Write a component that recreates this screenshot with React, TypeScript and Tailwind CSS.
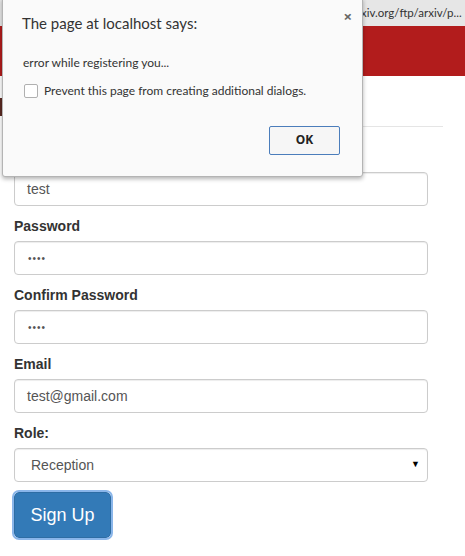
export default function App() {
  const fields = [
    { label: "Password", value: "••••", dots: true },
    { label: "Confirm Password", value: "••••", dots: true },
    { label: "Email", value: "test@gmail.com", dots: false },
  ];

  return (
    <div className="relative w-[465px] h-[556px] overflow-hidden bg-white font-['Liberation_Sans',Arial,sans-serif] text-[14px] text-[#333]">
      {/* Browser url bar */}
      <div className="h-[26px] bg-[#e6e6e6] flex items-center pl-[361px] text-[11.5px] text-[#333] font-['Lato','Noto_Sans',sans-serif] whitespace-nowrap">
        xiv.org/ftp/arxiv/p...
      </div>

      {/* Site header */}
      <div className="h-[50px] bg-[#b21c1c]" />

      {/* Page header */}
      <div className="mx-[14px] w-[429px] h-[51px] border-b border-[#e5e5e5] flex items-end pb-[8px]">
        <div className="w-[3px] h-[18px] bg-[#5a2a22] -ml-[14px] mb-[2px]" />
      </div>

      {/* Form */}
      <div className="px-[14px] w-[442px] pt-[20px]">
        <label className="block font-bold leading-[20px] mb-[5px]">Username</label>
        <div className="h-[34px] border border-[#ccc] rounded-[4px] shadow-[inset_0_1px_1px_rgba(0,0,0,0.075)] flex items-center px-[12px] text-[#555]">
          test
        </div>

        {fields.map((f) => (
          <div key={f.label}>
            <label className="block font-bold leading-[20px] mt-[10px] mb-[5px]">{f.label}</label>
            <div className="h-[34px] border border-[#ccc] rounded-[4px] shadow-[inset_0_1px_1px_rgba(0,0,0,0.075)] flex items-center px-[12px] text-[#555]">
              {f.dots ? <span className="text-[10px] tracking-[1px] pl-[1px]">{f.value}</span> : f.value}
            </div>
          </div>
        ))}

        <label className="block font-bold leading-[20px] mt-[10px] mb-[5px]">Role:</label>
        <div className="h-[34px] border border-[#ccc] rounded-[4px] shadow-[inset_0_1px_1px_rgba(0,0,0,0.075)] flex items-center justify-between pl-[16px] pr-[7px] text-[#555]">
          <span>Reception</span>
          <span className="text-[9px] text-black">▼</span>
        </div>

        <button className="mt-[10px] w-[97px] h-[46px] rounded-[5px] bg-[#337ab7] border border-[#2e6da4] outline outline-2 outline-[#8ab6ea] text-white text-[18px]">
          Sign Up
        </button>
      </div>

      {/* Alert dialog */}
      <div className="absolute left-[2px] top-[-2px] w-[361px] h-[179px] bg-[#fafafa] border border-[#b4b4b4] rounded-b-[3px] shadow-[0_2px_4px_rgba(0,0,0,0.3)] font-['Lato','Noto_Sans',sans-serif]">
        <div className="flex justify-between pl-[19px] pr-[10px] pt-[13px]">
          <span className="text-[15px] text-[#333]">The page at localhost says:</span>
          <span className="text-[15px] font-bold text-[#666] leading-none -mt-[3px] font-['Noto_Sans',sans-serif]">×</span>
        </div>
        <div className="pl-[20px] mt-[19px] text-[12px] text-[#333]">error while registering you...</div>
        <div className="pl-[21px] mt-[10px] flex items-center gap-[6px] text-[12px] text-[#333]">
          <span className="w-[14px] h-[14px] border border-[#b0b0b0] rounded-[2px] bg-white" />
          <span>Prevent this page from creating additional dialogs.</span>
        </div>
        <div className="flex justify-end pr-[22px] mt-[26px]">
          <button className="w-[71px] h-[29px] bg-[#f6f6f6] border border-[#4b7dbb] rounded-[2px] text-[12px] font-bold text-[#222] font-['Noto_Sans',sans-serif]">
            OK
          </button>
        </div>
      </div>
    </div>
  );
}
